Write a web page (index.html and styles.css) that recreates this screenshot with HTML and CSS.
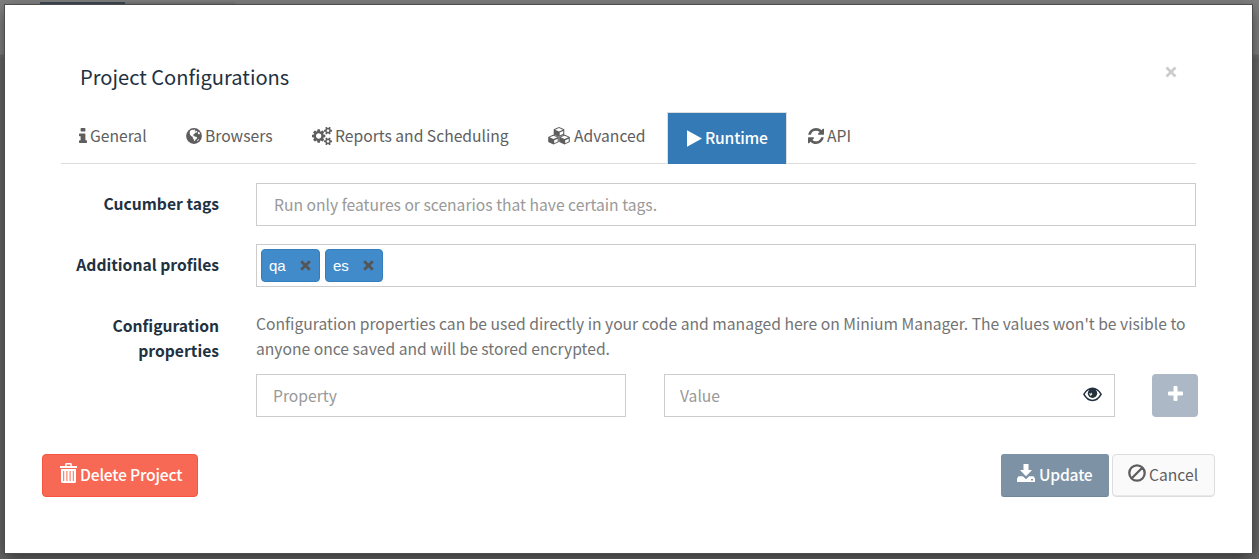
FILE: index.html
```
<!DOCTYPE html>
<html lang="en">
<head>
<meta charset="utf-8">
<title>Project Configurations</title>
<link rel="stylesheet" href="styles.css">
</head>
<body>
<div class="modal">
  <header class="header">
    <h4 class="title">Project Configurations</h4>
    <button class="close" aria-label="Close"><svg width="12" height="12" viewBox="0 0 12 12"><path d="M1.5 1.5l9 9M10.5 1.5l-9 9" stroke="currentColor" stroke-width="2.7"/></svg></button>
  </header>
  <nav class="tabs">
    <a class="tab general"><svg width="8" height="15" viewBox="576 128 640 1408" preserveAspectRatio="none"><path d="M1216 1344v128q0 26-19 45t-45 19h-512q-26 0-45-19t-19-45v-128q0-26 19-45t45-19h64v-384h-64q-26 0-45-19t-19-45v-128q0-26 19-45t45-19h384q26 0 45 19t19 45v576h64q26 0 45 19t19 45zm-128-1152v192q0 26-19 45t-45 19h-256q-26 0-45-19t-19-45v-192q0-26 19-45t45-19h256q26 0 45 19t19 45z"/></svg><span>General</span></a>
    <a class="tab browsers"><svg width="16" height="16" viewBox="0 0 16 16"><circle cx="8" cy="8" r="7.9"/><path class="land" d="M4.1 2.7l2-.9 1.2.2 1-.5 1.2.5-.9 1 .8.4 1-.7.9.8-.6.9-1.5.3-.8 1.2-1.1.6-.2 1 1 .3.5.8 1.5.1 1.1.7-.7 1.5-1 .5-.5 1.3-.8.4-.5-1.9-1-1.1.2-1.2-1.5-.7-1.3-1.5-.5-1.8zM11.9 4.2l1.2-.5.9 1.9-.9.9-1.3-.8zM11 12.4l1.5-1.4.5.5-1.5 1.7z"/></svg><span>Browsers</span></a>
    <a class="tab reports"><svg width="20" height="18" viewBox="0 0 1920 1728"><path transform="translate(0 -32)" d="M896 896q0-106-75-181t-181-75-181 75-75 181 75 181 181 75 181-75 75-181zm768 512q0-52-38-90t-90-38-90 38-38 90q0 53 37.5 90.5t90.5 37.5 90.5-37.5 37.5-90.5zm0-1024q0-52-38-90t-90-38-90 38-38 90q0 53 37.5 90.5t90.5 37.5 90.5-37.5 37.5-90.5zm-384 421v185q0 10-7 19.5t-16 10.5l-155 24q-11 35-32 76 34 48 90 115 7 11 7 20 0 12-7 19-23 30-82.5 89.5t-78.5 59.5q-11 0-21-7l-115-90q-37 19-77 31-11 108-23 155-7 24-30 24h-186q-11 0-20-7.5t-10-17.5l-23-153q-34-10-75-31l-118 89q-7 7-20 7-11 0-21-8-144-133-144-160 0-9 7-19 10-14 41-53t47-61q-23-44-35-82l-152-24q-10-1-17-9.5t-7-19.5v-185q0-10 7-19.5t16-10.5l155-24q11-35 32-76-34-48-90-115-7-11-7-20 0-12 7-20 22-30 82-89t79-59q11 0 21 7l115 90q34-18 77-32 11-108 23-154 7-24 30-24h186q11 0 20 7.5t10 17.5l23 153q34 10 75 31l118-89q8-7 20-7 11 0 21 8 144 133 144 160 0 8-7 19-12 16-42 54t-45 60q23 48 34 82l152 23q10 2 17 10.5t7 19.5zm640 533v140q0 16-149 31-12 27-30 52 51 113 51 138 0 4-4 7-122 71-124 71-8 0-46-47t-52-68q-20 2-30 2t-30-2q-14 21-52 68t-46 47q-2 0-124-71-4-3-4-7 0-25 51-138-18-25-30-52-149-15-149-31v-140q0-16 149-31 13-29 30-52-51-113-51-138 0-4 4-7 4-2 35-20t59-34 30-16q8 0 46 46.5t52 67.5q20-2 30-2t30 2q51-71 92-112l6-2q4 0 124 70 4 3 4 7 0 25-51 138 17 23 30 52 149 15 149 31zm0-1024v140q0 16-149 31-12 27-30 52 51 113 51 138 0 4-4 7-122 71-124 71-8 0-46-47t-52-68q-20 2-30 2t-30-2q-14 21-52 68t-46 47q-2 0-124-71-4-3-4-7 0-25 51-138-18-25-30-52-149-15-149-31v-140q0-16 149-31 13-29 30-52-51-113-51-138 0-4 4-7 4-2 35-20t59-34 30-16q8 0 46 46.5t52 67.5q20-2 30-2t30 2q51-71 92-112l6-2q4 0 124 70 4 3 4 7 0 25-51 138 17 23 30 52 149 15 149 31z"/></svg><span>Reports and Scheduling</span></a>
    <a class="tab advanced"><svg width="22" height="18" viewBox="0 0 22 18"><defs><g id="cube"><path d="M5.5 0L10.8 2.3V7.4L5.5 10 .2 7.4V2.3z"/><path class="land" d="M5.5 1.1L9.4 2.7 5.5 4.400 1.600 2.700zM6.200 5.600L9.700 4.100V6.800L6.200 8.600z"/></g></defs><use href="#cube" x="5.5" y="0"/><use href="#cube" x="0" y="7.6"/><use href="#cube" x="11" y="7.6"/></svg><span>Advanced</span></a>
    <a class="tab runtime active"><svg width="15" height="17" viewBox="0 0 15 17"><path d="M0 .2L15 8.5 0 16.8z"/></svg><span>Runtime</span></a>
    <a class="tab api"><svg width="16" height="16" viewBox="128 128 1536 1536"><path d="M1639 1056q0 5-1 7-64 268-268 434.500t-478 166.500q-146 0-282.500-55t-243.500-157l-129 129q-19 19-45 19t-45-19-19-45v-448q0-26 19-45t45-19h448q26 0 45 19t19 45-19 45l-137 137q71 66 161 102t187 36q134 0 250-65t186-179q11-17 53-117 8-23 30-23h192q13 0 22.500 9.500t9.500 22.500zm25-800v448q0 26-19 45t-45 19h-448q-26 0-45-19t-19-45 19-45l138-138q-148-137-349-137-134 0-250 65t-186 179q-11 17-53 117-8 23-30 23h-199q-13 0-22.500-9.500t-9.500-22.500v-7q65-268 270-434.500t480-166.500q146 0 284 55.500t245 156.500l130-129q19-19 45-19t45 19 19 45z"/></svg><span>API</span></a>
  </nav>
  <div class="form">
    <div class="row">
      <label class="label">Cucumber tags</label>
      <div class="field tags-field"><span class="ph">Run only features or scenarios that have certain tags.</span></div>
    </div>
    <div class="row">
      <label class="label">Additional profiles</label>
      <div class="field chips">
        <span class="chip qa"><span>qa</span><svg width="11" height="11" viewBox="0 0 11 11"><path d="M1.200 1.200l8.600 8.600M9.800 1.200l-8.600 8.600"/></svg></span>
        <span class="chip es"><span>es</span><svg width="11" height="11" viewBox="0 0 11 11"><path d="M1.200 1.200l8.600 8.600M9.800 1.200l-8.600 8.600"/></svg></span>
      </div>
    </div>
    <div class="row last">
      <label class="label">Configuration<br>properties</label>
      <div class="props">
        <p class="help"><span class="l1">Configuration properties can be used directly in your code and managed here on Minium Manager. The values won't be visible to</span><br><span class="l2">anyone once saved and will be stored encrypted.</span></p>
        <div class="pair">
          <div class="field property"><span class="ph">Property</span></div>
          <div class="field value"><span class="ph">Value</span><svg width="19" height="15" viewBox="0 0 19 15"><path fill-rule="evenodd" d="M0 7.300Q3.800.5 9.500.5T19 7.300Q15.200 14.300 9.500 14.300T0 7.300zM1.800 7.300Q5 12.700 9.500 12.700T17.200 7.300Q15.900 4.600 13.600 3.200L5.400 3.200Q3.100 4.600 1.800 7.300z"/><circle cx="9.500" cy="6.300" r="4.700"/><path class="glint" d="M6.200 5.800l1.300 1 1.200-1.200.6 1.800-1.600 1.700Q6.200 8 6.200 5.800z"/></svg></div>
          <button class="plus" aria-label="Add"><svg width="15" height="15" viewBox="0 0 15 15"><path d="M5.500 1q0-1 1-1h2q1 0 1 1v4.500H14q1 0 1 1v2q0 1-1 1H9.500V14q0 1-1 1h-2q-1 0-1-1V9.500H1q-1 0-1-1v-2q0-1 1-1h4.500z"/></svg></button>
        </div>
      </div>
    </div>
  </div>
  <footer class="footer">
    <button class="btn delete"><svg width="17" height="20" viewBox="0 0 17 20"><path fill-rule="evenodd" d="M0 3h5.200V1.300Q5.200 0 6.500 0h4Q11.800 0 11.800 1.300V3H17v2H0zM6.600 1.500V3h3.800V1.500zM1 6h15v12.500q0 1.500-1.500 1.500h-12Q1 20 1 18.500zM3.200 8v10h1V8zm3.200 0v10h1V8zm3.200 0v10h1V8zm3.200 0v10h1V8z"/></svg><span>Delete Project</span></button>
    <button class="btn update"><svg width="18" height="18" viewBox="0 0 18 18"><path fill-rule="evenodd" d="M6.500 0h5v6H15L9 12.300 3 6h3.500zM1.500 12.300h4.300L9 15.200l3.200-2.900h4.300L18 14.500V18H0v-3.500zM14 15v1.500h2V15z"/></svg><span>Update</span></button>
    <button class="btn cancel"><svg width="18" height="18" viewBox="0 0 18 18"><path d="M4 14L14 4M9 1.300a7.700 7.700 0 1 0 0 15.400A7.700 7.700 0 1 0 9 1.300z" fill="none" stroke="currentColor" stroke-width="2.300"/></svg><span>Cancel</span></button>
  </footer>
</div>
</body>
</html>
```
FILE: styles.css
```
* { box-sizing: border-box; }
body {
  margin: 0;
  height: 559px;
  overflow: hidden;
  padding: 5px 7px 6px 5px;
  font-family: "Noto Sans CJK SC", "Noto Sans", sans-serif;
  font-size: 15.67px;
  line-height: 25px;
  color: #5e5e5e;
  background:
    linear-gradient(90deg, #3c4853 0 85px, #777 85px) 40px 2px / 195px 3px no-repeat,
    linear-gradient(#7f7f7f 0 54px, #6b6b6b 55px 57px, #666 58px);
}
svg { fill: currentColor; display: block; flex: none; }
button { font: inherit; margin: 0; padding: 0; border: 0; background: none; }
span { white-space: nowrap; }
.modal {
  height: 548px;
  background: #fff;
  outline: 1px solid #4d4d4d;
  box-shadow: 0 5px 15px rgba(0, 0, 0, .5);
}
.header { display: flex; justify-content: space-between; height: 107px; padding: 57px 75px 0 75px; }
.title { margin: 0; font-size: 20.1px; font-weight: 400; line-height: 30px; color: #22313f; }
.close { width: 12px; height: 12px; margin-top: 4px; color: #ccc; }
.tabs { display: flex; width: 1135px; height: 52px; margin-left: 56px; border-bottom: 1px solid #ddd; }
.tab { display: flex; align-items: center; height: 47px; gap: 3px; color: #5e5e5e; }
.tab span { height: 26px; }
.general { width: 107px; padding-left: 18px; }
.browsers { width: 126px; padding-left: 18px; }
.reports { width: 236px; padding-left: 18px; }
.advanced { width: 137px; padding-left: 18px; gap: 4px; }
.runtime { width: 120px; height: 52px; padding-left: 19px; gap: 3px; border: 1px solid #ddd; border-bottom: 0; background: #337ab7; color: #fff; }
.runtime span { height: 27px; }
.api { padding-left: 21px; }
.land { fill: #fff; }
.active, .delete, .update { font-weight: 500; letter-spacing: -.2px; }
.form { padding: 19px 54px 0 61px; }
.row { display: flex; height: 43px; margin-bottom: 18px; }
.row.last { height: 112px; margin: 0; }
.label { flex: none; width: 153px; margin-right: 37px; padding-top: 8px; text-align: right; font-weight: 700; color: #22313f; }
.field { display: flex; align-items: center; height: 43px; border: 1px solid #ccc; background: #fff; }
.tags-field, .chips { width: 940px; }
.tags-field { padding-left: 17px; }
.ph { color: #999; }
.chips { padding-left: 4px; gap: 5px; font: 15px/20px "Liberation Sans", Arial, sans-serif; }
.chip { display: flex; align-items: center; justify-content: space-between; width: 59px; height: 33px; padding: 0 8px 0 7px; border: 1px solid #357ebd; border-radius: 4px; background: #428bca; color: #fff; }
.chip.es { width: 58px; }
.chip svg { fill: none; stroke: #555; stroke-width: 2.8; }
.props { flex: none; width: 942px; }
.help { margin: 0; height: 69px; padding-top: 6px; color: #737373; }
.pair { display: flex; }
.property { width: 370px; margin-right: 38px; padding-left: 16px; }
.value { width: 451px; margin-right: 37px; padding: 0 12px 0 15px; justify-content: space-between; color: #22313f; }
.value svg { margin-bottom: 3px; }
.glint { fill: #e8dcc8; }
.plus { display: flex; justify-content: center; width: 46px; height: 43px; padding-top: 12px; border-radius: 4px; background: #acb8c6; color: #fff; }
.footer { display: flex; height: 43px; margin: 37px 37px 0; }
.btn { display: flex; align-items: center; height: 43px; border: 1px solid; border-radius: 4px; white-space: nowrap; }
.btn svg { margin-bottom: 6px; }
.btn span { height: 27px; }
.delete { width: 156px; padding-left: 17px; gap: 3px; margin-right: auto; background: #f76954; border-color: #f65341; color: #fff; }
.update { width: 108px; padding-left: 15px; gap: 4px; margin-right: 3px; border-radius: 3px; background: #7e92a6; border-color: #7e92a6 #7e92a6 #70869b; color: #fff; }
.cancel { width: 103px; padding-left: 15px; gap: 3px; background: #fafafa; border-color: #ddd; box-shadow: inset 0 -1px #e8e8e8; color: #5e5e5e; }
```
